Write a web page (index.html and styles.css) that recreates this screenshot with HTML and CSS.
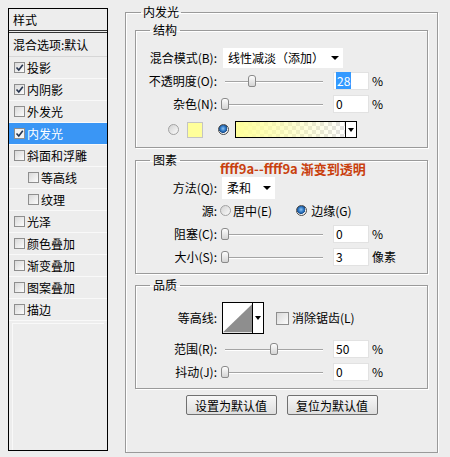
FILE: index.html
```html
<!DOCTYPE HTML>
<html>
<head>
	<meta charset="utf-8" />
	<title>图层样式 - 内发光</title>
	<link rel="stylesheet" href="styles.css">
</head>
<body>
	<div class="dialog">
		<div class="styles">
			<div class="styles-head">样式</div>
			<div class="styles-blend">混合选项:默认</div>
			<ul class="list">
				<li><span class="check on"><svg viewBox="0 0 9 9"><path d="M1.5 4.5 L3.8 7 L7.8 1.8" /></svg></span>投影</li>
				<li><span class="check on"><svg viewBox="0 0 9 9"><path d="M1.5 4.5 L3.8 7 L7.8 1.8" /></svg></span>内阴影</li>
				<li><span class="check"></span>外发光</li>
				<li class="selected"><span class="check on"><svg viewBox="0 0 9 9"><path d="M1.5 4.5 L3.8 7 L7.8 1.8" /></svg></span>内发光</li>
				<li><span class="check"></span>斜面和浮雕</li>
				<li class="sub"><span class="check"></span>等高线</li>
				<li class="sub"><span class="check"></span>纹理</li>
				<li><span class="check"></span>光泽</li>
				<li><span class="check"></span>颜色叠加</li>
				<li><span class="check"></span>渐变叠加</li>
				<li><span class="check"></span>图案叠加</li>
				<li><span class="check"></span>描边</li>
			</ul>
			<div class="styles-rest"></div>
		</div>

		<fieldset class="panel">
			<legend>内发光</legend>

			<fieldset class="group group-structure">
				<legend>结构</legend>
				<div class="row">
					<label>混合模式(B):</label>
					<div class="select select-mode"><span>线性减淡（添加）</span><i class="arrow"></i></div>
				</div>
				<div class="row">
					<label>不透明度(O):</label>
					<div class="slider"><span class="thumb" style="--v: 28"></span></div>
					<div class="num"><span class="sel">28</span></div>
					<span class="unit">%</span>
				</div>
				<div class="row">
					<label>杂色(N):</label>
					<div class="slider"><span class="thumb" style="--v: 0"></span></div>
					<div class="num">0</div>
					<span class="unit">%</span>
				</div>
				<div class="row row-color">
					<span class="radio"></span>
					<span class="swatch"></span>
					<span class="radio on"></span>
					<div class="gradient"><span class="gradient-fill"></span><span class="gradient-btn"><i class="arrow"></i></span></div>
				</div>
			</fieldset>

			<fieldset class="group group-elements">
				<legend>图素</legend>
				<div class="row">
					<label>方法(Q):</label>
					<div class="select select-method"><span>柔和</span><i class="arrow"></i></div>
				</div>
				<div class="row">
					<label class="short">源:</label>
					<span class="radio"></span>
					<span class="opt">居中(E)</span>
					<span class="radio on radio-edge"></span>
					<span class="opt opt-edge">边缘(G)</span>
				</div>
				<div class="row">
					<label>阻塞(C):</label>
					<div class="slider"><span class="thumb" style="--v: 0"></span></div>
					<div class="num">0</div>
					<span class="unit">%</span>
				</div>
				<div class="row">
					<label>大小(S):</label>
					<div class="slider"><span class="thumb" style="--v: 0"></span></div>
					<div class="num">3</div>
					<span class="unit">像素</span>
				</div>
			</fieldset>

			<fieldset class="group group-quality">
				<legend>品质</legend>
				<div class="row row-contour">
					<label>等高线:</label>
					<div class="contour">
						<svg class="contour-pic" viewBox="0 0 31 30"><path d="M0 30 L31 0 L31 30 Z" /></svg>
						<span class="contour-btn"><i class="arrow"></i></span>
					</div>
					<span class="check"></span>
					<span class="opt">消除锯齿(L)</span>
				</div>
				<div class="row">
					<label>范围(R):</label>
					<div class="slider"><span class="thumb" style="--v: 50"></span></div>
					<div class="num">50</div>
					<span class="unit">%</span>
				</div>
				<div class="row">
					<label>抖动(J):</label>
					<div class="slider"><span class="thumb" style="--v: 0"></span></div>
					<div class="num">0</div>
					<span class="unit">%</span>
				</div>
			</fieldset>

			<div class="buttons">
				<button>设置为默认值</button>
				<button>复位为默认值</button>
			</div>

			<div class="note">ffff9a--ffff9a 渐变到透明</div>
		</fieldset>
	</div>
</body>
</html>
```

FILE: styles.css
```css
body {
	background-color: #ededed;
	color: #000;
	font-family: "Noto Sans CJK SC", "Liberation Sans", sans-serif;
	font-size: 12px;
	line-height: 1;
	margin: 0;
	padding: 0;
}

.dialog {
	align-items: flex-start;
	display: flex;
	padding: 5px 0 0 8px;
}

/* left list of styles */
.styles {
	border: 1px solid #000;
	box-sizing: border-box;
	display: flex;
	flex-direction: column;
	height: 443px;
	margin-top: 3px;
	width: 100px;
}
.styles-head {
	border-bottom: 3px double #333;
	height: 21px;
	line-height: 21px;
	padding-left: 4px;
}
.styles-blend {
	border-bottom: 1px solid #d6d6d6;
	height: 23px;
	line-height: 23px;
	padding-left: 4px;
}
.list {
	margin: 0;
	padding: 0;
}
.list > li {
	align-items: center;
	border-bottom: 1px solid #f9f9f9;
	display: flex;
	height: 21px;
	list-style-type: none;
	padding-left: 5px;
}
.list > li.sub {
	padding-left: 19px;
}
.list > li.selected {
	background-color: #3a96f5;
	color: #fff;
}
.styles-rest {
	border-left: 1px solid #f9f9f9;
	border-top: 1px solid #f9f9f9;
	flex: 1;
	margin: 2px 3px 0 3px;
}

.check {
	background: linear-gradient(135deg, #d9d9d9, #fcfcfc);
	border: 1px solid #8e8e8e;
	box-sizing: border-box;
	display: inline-block;
	flex: none;
	height: 11px;
	margin-right: 2px;
	width: 11px;
}
.check svg {
	display: block;
	height: 9px;
	width: 9px;
}
.check path {
	fill: none;
	stroke: #26344f;
	stroke-width: 1.6;
}
.selected .check {
	background: #f4f4f4;
}

/* right panel */
fieldset {
	border: 1px solid #9a9a9a;
	box-shadow: inset 1px 1px 0 #fff, 1px 1px 0 #fff;
	margin: 0;
	min-width: 0;
}
legend {
	line-height: 14px;
	padding: 0 3px;
}
.panel {
	box-sizing: border-box;
	height: 448px;
	margin-left: 17px;
	padding: 4px 9px 0 9px;
	position: relative;
	width: 313px;
}
.panel > legend {
	margin-left: 6px;
	padding: 0 2px;
}
.group {
	padding: 9px 0 6px 0;
}
.group > legend {
	margin-left: 14px;
}
.group-elements {
	margin-top: 5px;
	padding-bottom: 5px;
}
.group-quality {
	margin-top: 4px;
	padding: 10px 0 5px 0;
}

.row {
	align-items: center;
	display: flex;
	height: 23px;
}
.row label {
	flex: none;
	margin-right: 5px;
	text-align: right;
	width: 81px;
}
.row label.short {
	margin-right: 3px;
}
.row-color {
	margin-top: 3px;
	padding-left: 32px;
}
.row-contour {
	height: 32px;
	margin-bottom: 3px;
}

.arrow {
	border-left: 4px solid transparent;
	border-right: 4px solid transparent;
	border-top: 4px solid #000;
	display: block;
	height: 0;
	width: 0;
}

.select {
	align-items: center;
	background-color: #fff;
	box-sizing: border-box;
	display: flex;
	justify-content: space-between;
	padding: 0 4px 0 5px;
}
.select-mode {
	height: 20px;
	margin-left: 1px;
	width: 120px;
}
.select-method {
	height: 22px;
	width: 53px;
}

.slider {
	flex: none;
	height: 16px;
	position: relative;
	width: 104px;
}
.slider::before {
	background-color: #a4a4a4;
	box-shadow: 0 1px 0 #fff;
	content: '';
	height: 1px;
	left: 3px;
	position: absolute;
	right: 3px;
	top: 8px;
}
.thumb {
	background: linear-gradient(#fdfdfd, #d4d4d4);
	border: 1px solid #8a8a8a;
	border-radius: 3px 3px 2px 2px;
	box-sizing: border-box;
	height: 12px;
	left: calc(var(--v) * 0.98px - 1px);
	position: absolute;
	top: 2px;
	width: 8px;
}

.num {
	background-color: #fff;
	border: 1px solid #e2e2e2;
	box-sizing: border-box;
	flex: none;
	height: 18px;
	line-height: 16px;
	margin-left: 7px;
	padding-left: 2px;
	width: 36px;
}
.sel {
	background-color: #3399ff;
	color: #fff;
	padding: 0 1px;
}
.unit {
	margin-left: 3px;
}

.radio {
	background: linear-gradient(135deg, #d2d2d2, #fbfbfb);
	border: 1px solid #a2a2a2;
	border-radius: 50%;
	box-sizing: border-box;
	flex: none;
	height: 11px;
	width: 11px;
}
.radio.on {
	background: radial-gradient(circle at 45% 40%, #8ec3f2 0, #2f78c4 35%, #1c4f8c 55%, #f2f2f2 62%);
	border-color: #4a4a4a;
}
.swatch {
	background-color: #ffff9a;
	border: 1px solid #c4c4c4;
	box-sizing: border-box;
	height: 16px;
	margin: 0 15px 0 8px;
	width: 16px;
}
.gradient {
	border: 1px solid #000;
	box-sizing: border-box;
	display: flex;
	height: 17px;
	margin-left: 6px;
	width: 122px;
}
.gradient-fill {
	background:
		linear-gradient(to right, #ffff9a, rgba(255, 255, 154, 0)),
		repeating-conic-gradient(#e2e2e2 0 25%, #fff 0 50%) 0 0 / 8px 8px;
	flex: 1;
}
.gradient-btn,
.contour-btn {
	align-items: center;
	background-color: #fff;
	border-left: 1px solid #000;
	display: flex;
	justify-content: center;
	width: 10px;
}
.gradient-btn .arrow,
.contour-btn .arrow {
	border-left-width: 3px;
	border-right-width: 3px;
}

.opt {
	margin-left: 2px;
}
.radio-edge {
	margin-left: 24px;
}
.opt-edge {
	margin-left: 4px;
}

.contour {
	border: 1px solid #000;
	box-sizing: border-box;
	display: flex;
	height: 32px;
	margin-right: 12px;
	width: 42px;
}
.contour-pic {
	background-color: #fff;
	display: block;
	height: 30px;
	width: 31px;
}
.contour-pic path {
	fill: #8e8e8e;
}
.row-contour .check {
	height: 13px;
	margin-right: 1px;
	width: 13px;
}

.buttons {
	display: flex;
	gap: 10px;
	justify-content: center;
	margin-top: 6px;
}
.buttons button {
	background: linear-gradient(#f7f7f7, #dedede);
	border: 1px solid #707070;
	border-radius: 2px;
	box-sizing: border-box;
	color: #000;
	font-family: inherit;
	font-size: 12px;
	height: 20px;
	padding: 0;
	width: 91px;
}

.note {
	color: #c9400e;
	font-size: 13px;
	font-weight: bold;
	left: 94px;
	line-height: 16px;
	position: absolute;
	top: 142px;
	white-space: nowrap;
}
```
